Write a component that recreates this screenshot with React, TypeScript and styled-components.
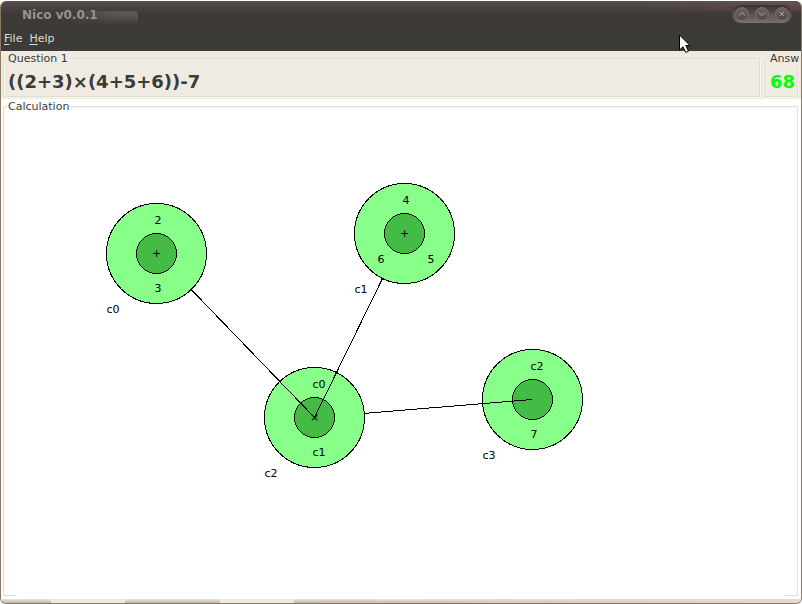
import React from "react";
import styled, { createGlobalStyle } from "styled-components";

const GlobalStyle = createGlobalStyle`
  * { box-sizing: border-box; }
  body {
    margin: 0;
    background: #ffffff;
    color: #3c3b37;
    font-family: "DejaVu Sans", Verdana, sans-serif;
    font-size: 11px;
    line-height: 13px;
  }
`;

const Page = styled.div`
  display: flex;
  flex-direction: column;
  min-height: 100vh;
  padding-top: 1px;
  overflow: hidden;
`;

const AppWindow = styled.main`
  flex: 1;
  display: flex;
  flex-direction: column;
  overflow: hidden;
  border: 1px solid #8a7865;
  border-top: 0;
  border-radius: 6px;
  background: #ffffff;
`;

const Header = styled.header`
  display: flex;
  flex-direction: column;
  height: 50px;
  color: #dfdbd2;
  background:
    linear-gradient(100deg, transparent 80%, rgba(150, 90, 90, 0.25)) 0 0 / 100% 10px no-repeat,
    linear-gradient(#575150 0, #4a4142 7px, #3f3938 13px, #3c3b37 24px);
`;

const TitleBar = styled.div`
  display: flex;
  align-items: flex-start;
  justify-content: space-between;
  height: 28px;
  padding: 4px 9px 0 21px;
`;

const Title = styled.h1`
  position: relative;
  z-index: 0;
  margin: 0;
  padding-top: 3px;
  color: #98938a;
  font-size: 12px;
  line-height: 15px;

  &::before {
    content: "";
    position: absolute;
    z-index: -1;
    left: 42px;
    top: 6px;
    width: 74px;
    height: 14px;
    border-radius: 2px 3px 0 0;
    background: linear-gradient(90deg, transparent, #5b5852 70%);
    mask-image: linear-gradient(#000 30%, transparent);
  }
`;

const WindowButtons = styled.div`
  display: flex;
  align-items: center;
  gap: 6px;
  height: 18px;
  padding: 0 3px;
  border-radius: 9px;
  background: linear-gradient(#3d3030, #777170);
`;

const WindowButton = styled.button`
  display: flex;
  width: 14px;
  height: 14px;
  padding: 0;
  border: 1px solid #79706d;
  border-radius: 50%;
  background: linear-gradient(#70635f, #514a47);
`;

const MenuBar = styled.nav`
  display: flex;
  gap: 7px;
  padding: 3px;
`;

const MenuButton = styled.button`
  padding: 0;
  border: 0;
  background: none;
  color: inherit;
  font: inherit;
`;

const Mnemonic = styled.span`
  text-decoration: underline;
  text-underline-offset: 2px;
`;

const Summary = styled.section`
  display: grid;
  grid-template-columns: minmax(0, 1fr) 33px;
  gap: 5px;
  height: 48px;
  padding: 1px 3px 2px 2px;
  background: #efebe2;
`;

const Frame = styled.fieldset`
  min-width: 0;
  margin: 0;
  padding: 0 0 0 4px;
  border: 1px solid #e2dccd;
  box-shadow: 1px 1px #f8f5ed, inset 1px 1px #f8f5ed;
`;

const Legend = styled.legend<{ $paper?: boolean }>`
  padding: 0 1px;
  margin-left: -1px;
  white-space: nowrap;
  background: ${(p) => (p.$paper ? "#ffffff" : "#efebe2")};
`;

const Value = styled.output<{ $correct?: boolean }>`
  display: block;
  padding-top: 6px;
  font-size: 18px;
  font-weight: bold;
  line-height: 22px;
  white-space: nowrap;
  color: ${(p) => (p.$correct ? "#00ff00" : "#3c3b37")};
`;

const CalculationArea = styled.section`
  flex: 1;
  display: flex;
  padding: 1px 3px 3px 2px;
`;

const CalculationFrame = styled(Frame)`
  flex: 1;
  display: flex;
  border-color: #e8ded2;
  border-bottom: 0;
  box-shadow: inset 1px 1px #faf6ef;
  background:
    linear-gradient(#e2dccd, #e2dccd) left bottom / 12px 1px no-repeat,
    linear-gradient(#e2dccd, #e2dccd) right bottom / 12px 1px no-repeat;
`;

const Diagram = styled.svg`
  display: block;
  flex: 1;
  width: 100%;
  min-height: 460px;
  overflow: visible;
  font-size: 11px;

  circle, line { shape-rendering: crispEdges; stroke: #000000; }
  text { fill: #000000; }
`;

const StatusEdge = styled.footer`
  display: flex;
  justify-content: space-between;
  height: 4px;
  background: linear-gradient(#e9e5db, #bdb5ad);
`;

const EdgeTabs = styled.div`
  display: flex;
  gap: 95px;
  padding-left: 50px;
`;

const EdgeTab = styled.span`
  width: 74px;
  background: #efebe2;
`;

const EdgeTint = styled.span`
  width: 62%;
  background: linear-gradient(90deg, transparent, #e7d9d1);
`;

const Pointer = styled.svg`
  position: absolute;
  left: 678px;
  top: 33px;
  width: 14px;
  height: 21px;
  pointer-events: none;
`;

interface Part {
  text: string;
  dx: number;
  dy: number;
}

interface Circle {
  name: string;
  x: number;
  y: number;
  operator?: string;
  parts: Part[];
  to?: [number, number];
}

const top = { dx: -2, dy: -30 };
const bottom = { dx: -2, dy: 38 };
const lowerRight = { dx: 23, dy: 29 };
const lowerLeft = { dx: -27, dy: 29 };

// Painted in order: each link covers its target and is covered by its source.
const circles: Circle[] = [
  { name: "c3", x: 524, y: 286, parts: [{ text: "c2", ...top }, { text: "7", ...bottom }] },
  { name: "c2", x: 306, y: 304, operator: "×", to: [524, 286], parts: [{ text: "c0", ...top }, { text: "c1", ...bottom }] },
  { name: "c0", x: 148, y: 140, operator: "+", to: [306, 304], parts: [{ text: "2", ...top }, { text: "3", ...bottom }] },
  { name: "c1", x: 396, y: 120, operator: "+", to: [306, 304], parts: [{ text: "4", ...top }, { text: "5", ...lowerRight }, { text: "6", ...lowerLeft }] },
];

function CircleNode({ name, x, y, operator, parts, to }: Circle) {
  return (
    <g>
      {to && <line x1={x} y1={y} x2={to[0]} y2={to[1]} />}
      <circle cx={x} cy={y} r={50} fill="#88ff88" />
      <circle cx={x} cy={y} r={20} fill="#44bb44" />
      {operator && <text x={x} y={y + 3} textAnchor="middle">{operator}</text>}
      {parts.map((p) => (
        <text key={p.text} x={x + p.dx} y={y + p.dy}>{p.text}</text>
      ))}
      <text x={x - 50} y={y + 59}>{name}</text>
    </g>
  );
}

const controls = [
  { label: "Minimize", path: "M3 7.5 6 4.5 9 7.5" },
  { label: "Maximize", path: "M3 4.5 6 7.5 9 4.5" },
  { label: "Close", path: "M4 4 8 8 M8 4 4 8" },
];

export default function App() {
  return (
    <Page>
      <GlobalStyle />
      <AppWindow>
        <Header>
          <TitleBar>
            <Title>Nico v0.0.1</Title>
            <WindowButtons>
              {controls.map((c) => (
                <WindowButton key={c.label} aria-label={c.label}>
                  <svg width="12" height="12" viewBox="0 0 12 12" fill="none" stroke="#aaa19d">
                    <path d={c.path} />
                  </svg>
                </WindowButton>
              ))}
            </WindowButtons>
          </TitleBar>
          <MenuBar>
            <MenuButton><Mnemonic>F</Mnemonic>ile</MenuButton>
            <MenuButton><Mnemonic>H</Mnemonic>elp</MenuButton>
          </MenuBar>
        </Header>
        <Summary>
          <Frame>
            <Legend>Question 1</Legend>
            <Value>((2+3)×(4+5+6))-7</Value>
          </Frame>
          <Frame>
            <Legend>Answ</Legend>
            <Value $correct>68</Value>
          </Frame>
        </Summary>
        <CalculationArea>
          <CalculationFrame>
            <Legend $paper>Calculation</Legend>
            <Diagram role="img" aria-label="Calculation circles">
              <g transform="translate(0.5 0.5)">
                {circles.map((c) => <CircleNode key={c.name} {...c} />)}
              </g>
            </Diagram>
          </CalculationFrame>
        </CalculationArea>
        <StatusEdge>
          <EdgeTabs><EdgeTab /><EdgeTab /></EdgeTabs>
          <EdgeTint />
        </StatusEdge>
      </AppWindow>
      <Pointer viewBox="0 0 14 21" aria-hidden="true">
        <path d="M1.5 2 V17 L5 13.8 L7.8 19.5 L10.5 18.2 L7.8 12.5 H12 Z" fill="#ffffff" stroke="#000000" />
      </Pointer>
    </Page>
  );
}
